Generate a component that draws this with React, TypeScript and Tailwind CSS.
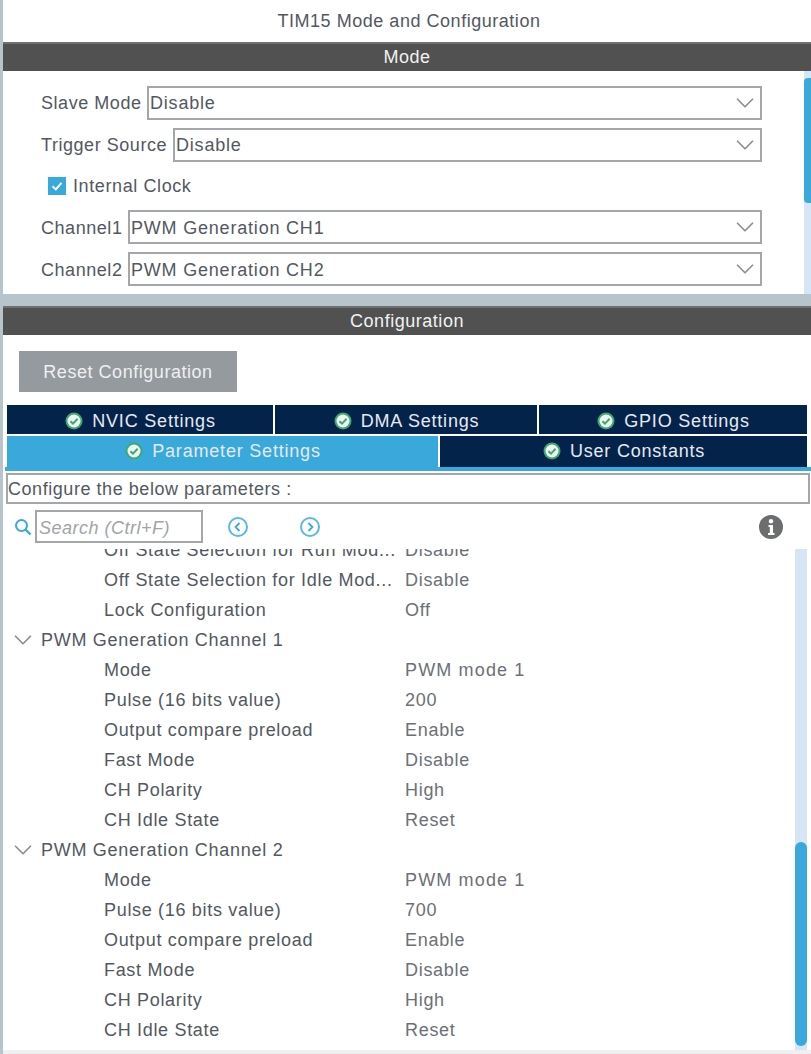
import React from 'react';
import { ChevronDown } from 'lucide-react';

const FONT = "font-['Liberation_Sans',Arial,sans-serif]";

const CheckBadge = () => (
    <svg width="18" height="18" viewBox="0 0 18 18" className="shrink-0">
        <circle cx="9" cy="9" r="8.5" fill="#3fa873" />
        <circle cx="9" cy="9" r="6.5" fill="#eef6f0" />
        <path d="M5.4 9.2 L8 11.6 L12.6 6.8" fill="none" stroke="#3fa873" strokeWidth="2" />
    </svg>
);

const SectionBar = ({ title }: { title: string }) => (
    <div className="h-[29px] bg-[#505150] border-t-2 border-[#6f7171] pb-[2px] flex items-center justify-center text-[#f2f2f2]">
        {title}
    </div>
);

const SelectRow = ({ label, value, labelWidth, textClass = '' }: { label: string; value: string; labelWidth: string; textClass?: string }) => (
    <div className="flex items-center">
        <span className={`whitespace-nowrap tracking-[0.55px] ${labelWidth} ${textClass}`}>{label}</span>
        <div className="flex-1 h-[34px] border-2 border-[#a3a7aa] flex items-center pl-[1px] justify-between tracking-[0.8px]">
            <span className={textClass}>{value}</span>
            <ChevronDown size={30} strokeWidth={1.4} className="text-[#8c9093]" />
        </div>
    </div>
);

const Tab = ({ label, active = false, className = '' }: { label: string; active?: boolean; className?: string }) => (
    <div className={`flex items-center justify-center gap-[9px] pl-[1px] text-[#e6eaf0] tracking-[0.8px] ${active ? 'bg-[#39a9dc]' : 'bg-[#03234b]'} ${className}`}>
        <CheckBadge />
        <span>{label}</span>
    </div>
);

const ParamRow = ({ name, value }: { name: string; value: string }) => (
    <div className="h-[30px] flex items-center pl-[101px] tracking-[0.68px]">
        <span className="w-[301px] whitespace-nowrap">{name}</span>
        <span className={`text-[#6c7076] ${value.startsWith('PWM') ? 'tracking-[1.15px]' : 'tracking-[0.7px]'}`}>{value}</span>
    </div>
);

const GroupRow = ({ title }: { title: string }) => (
    <div className="h-[30px] flex items-center pl-[5px] gap-[3px] tracking-[0.72px]">
        <ChevronDown size={30} strokeWidth={1.4} className="text-[#8c9093]" />
        <span>{title}</span>
    </div>
);

const channelRows = (pulse: string) => [
    ['Mode', 'PWM mode 1'],
    ['Pulse (16 bits value)', pulse],
    ['Output compare preload', 'Enable'],
    ['Fast Mode', 'Disable'],
    ['CH Polarity', 'High'],
    ['CH Idle State', 'Reset'],
];

export default function App() {
    return (
        <div className={`${FONT} w-[811px] h-[1054px] overflow-hidden bg-[#b8c4cc] pl-[3px] text-[18px] leading-none tracking-[0.53px] text-[#53585f] flex flex-col`}>
            <div className="h-[42px] bg-white pl-[4px] flex items-center justify-center">TIM15 Mode and Configuration</div>
            <SectionBar title="Mode" />

            {/* mode panel */}
            <div className="relative h-[223px] bg-white pl-[38px] pr-[49px] pt-[15px] flex flex-col gap-[8px]">
                <SelectRow label="Slave Mode" value="Disable" labelWidth="w-[106px]" />
                <SelectRow label="Trigger Source" value="Disable" labelWidth="w-[132px]" />
                <label className="h-[32px] flex items-center gap-[7px] pl-[7px] tracking-[0.6px]">
                    <span className="w-[18px] h-[18px] bg-[#39a9dc] flex items-center justify-center">
                        <svg width="14" height="14" viewBox="0 0 14 14">
                            <path d="M2.5 7.2 L5.8 10.4 L11.5 3.8" fill="none" stroke="#fff" strokeWidth="2" />
                        </svg>
                    </span>
                    Internal Clock
                </label>
                <SelectRow label="Channel1" value="PWM Generation CH1" labelWidth="w-[87px]" textClass="pt-[2px]" />
                <SelectRow label="Channel2" value="PWM Generation CH2" labelWidth="w-[87px]" textClass="pt-[2px]" />
                <div className="absolute right-0 top-0 bottom-0 w-[7px] bg-[#d6e6f4]">
                    <div className="mt-[7px] h-[125px] bg-[#39a9dc] rounded-l-[4px]" />
                </div>
            </div>

            <div className="h-[12px] shrink-0" />
            <SectionBar title="Configuration" />

            {/* configuration panel */}
            <div className="flex-1 bg-white flex flex-col min-h-0">
                <div className="pt-[16px] pl-[16px]">
                    <div className="w-[218px] h-[41px] bg-[#949a9e] text-[#f0f0f0] flex items-center justify-center tracking-[0.54px]">
                        Reset Configuration
                    </div>
                </div>

                <div className="mt-[13px] mx-[4px] grid grid-cols-[266px_262px_268px] gap-x-[2px] h-[29px]">
                    <Tab label="NVIC Settings" className="pt-[2px]" />
                    <Tab label="DMA Settings" className="pt-[2px]" />
                    <Tab label="GPIO Settings" className="pt-[2px]" />
                </div>
                <div className="mt-[2px] mx-[4px] grid grid-cols-[431px_367px] gap-x-[2px] h-[31px]">
                    <Tab label="Parameter Settings" active className="pb-[2px]" />
                    <Tab label="User Constants" className="pb-[2px]" />
                </div>
                <div className="h-[4px] ml-[2px] bg-[#39a9dc]" />

                <div className="mt-[2px] ml-[3px] mr-[1px] h-[31px] border-2 border-[#a3a7aa] flex items-center tracking-[0.55px]">
                    Configure the below parameters :
                </div>

                {/* search row */}
                <div className="h-[33px] mt-[6px] flex items-center pl-[11px] pr-[28px] text-[#a0a4a8]">
                    <svg width="18" height="18" viewBox="0 0 18 18" className="shrink-0">
                        <circle cx="7.5" cy="7.5" r="5.5" fill="none" stroke="#39a9dc" strokeWidth="2" />
                        <path d="M11.5 11.5 L16.5 16.5" stroke="#39a9dc" strokeWidth="2.4" />
                    </svg>
                    <div className="ml-[3px] w-[168px] h-[33px] border-2 border-[#a3a7aa] flex items-center pl-[2px] pt-[2px] italic tracking-[0.5px]">
                        Search (Ctrl+F)
                    </div>
                    <svg width="22" height="22" viewBox="0 0 22 22" className="ml-[24px]">
                        <circle cx="11" cy="11" r="9" fill="none" stroke="#5bb7e3" strokeWidth="2" />
                        <path d="M12.5 7 L8.5 11 L12.5 15" fill="none" stroke="#39a9dc" strokeWidth="1.8" />
                    </svg>
                    <svg width="22" height="22" viewBox="0 0 22 22" className="ml-[50px]">
                        <circle cx="11" cy="11" r="9" fill="none" stroke="#5bb7e3" strokeWidth="2" />
                        <path d="M9.5 7 L13.5 11 L9.5 15" fill="none" stroke="#39a9dc" strokeWidth="1.8" />
                    </svg>
                    <svg width="24" height="24" viewBox="0 0 24 24" className="ml-auto">
                        <circle cx="12" cy="12" r="12" fill="#6b6d6e" />
                        <circle cx="12" cy="6.2" r="2.2" fill="#fff" />
                        <path d="M9.5 10 H14 V18 H15.5 V20 H9 V18 H10.8 V12 H9.5 Z" fill="#fff" />
                    </svg>
                </div>

                {/* parameter list */}
                <div className="relative mt-[6px] h-[501px] shrink-0 overflow-hidden">
                    <div className="-mt-[14px]">
                        <ParamRow name="Off State Selection for Run Mod..." value="Disable" />
                        <ParamRow name="Off State Selection for Idle Mod..." value="Disable" />
                        <ParamRow name="Lock Configuration" value="Off" />
                        <GroupRow title="PWM Generation Channel 1" />
                        {channelRows('200').map(([name, value]) => (
                            <ParamRow key={name} name={name} value={value} />
                        ))}
                        <GroupRow title="PWM Generation Channel 2" />
                        {channelRows('700').map(([name, value]) => (
                            <ParamRow key={name} name={name} value={value} />
                        ))}
                    </div>
                    <div className="absolute right-[4px] top-0 bottom-0 w-[12px] bg-[#d6e6f4]">
                        <div className="mt-[293px] h-[204px] bg-[#39a9dc] rounded-[6px]" />
                    </div>
                </div>
                <div className="flex-1 bg-[#eef0f2]" />
            </div>
        </div>
    );
}
